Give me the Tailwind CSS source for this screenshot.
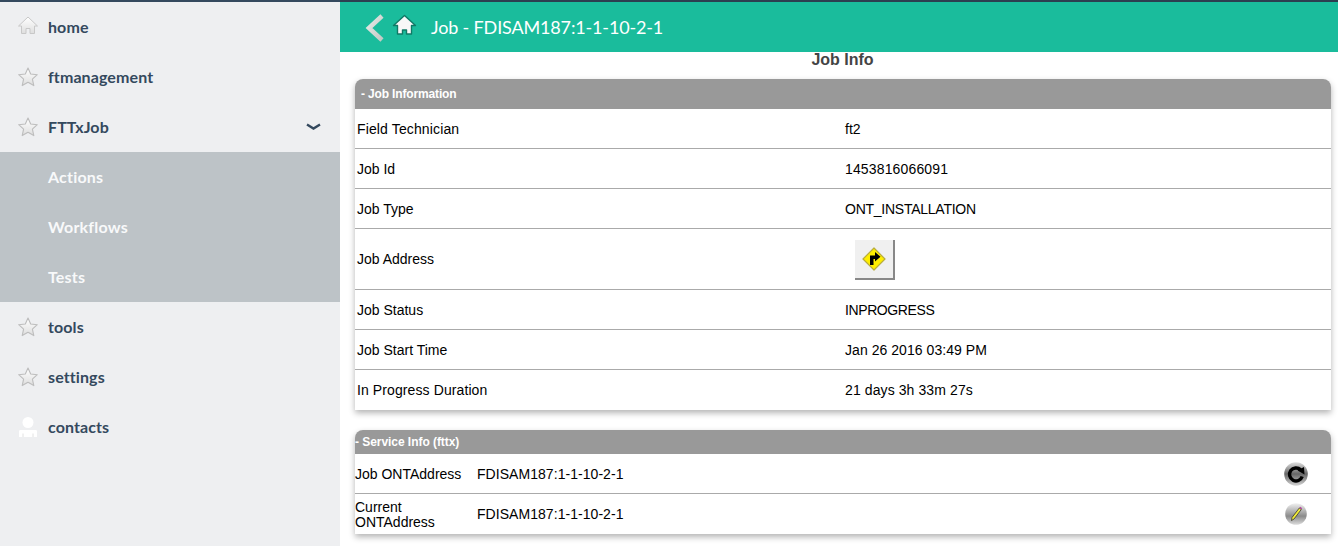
<!DOCTYPE html>
<html lang="en">
<head>
    <meta charset="UTF-8">
    <title>Job Info</title>
    <script src="https://cdn.jsdelivr.net/npm/@tailwindcss/browser@4"></script>
</head>
<body class="bg-white">
    <!-- shared gradients for the menu icons -->
    <svg class="absolute w-0 h-0">
        <defs>
            <linearGradient id="menuFill" x1="0" y1="0" x2="0" y2="1"><stop offset="0" stop-color="#ffffff"/><stop offset="1" stop-color="#dedede"/></linearGradient>
        </defs>
    </svg>
    <div class="flex h-[546px] w-[1338px] overflow-hidden font-['Liberation_Sans',Arial,sans-serif]">
        <!-- side menu -->
        <nav class="w-[340px] shrink-0 bg-[#eeeff1] border-t-2 border-[#34495e] text-[#34495e] font-['Lato',sans-serif] font-bold text-[16px] tracking-[0.1px]">
            <a class="flex items-center h-[50px] pl-[18px]">
                <svg class="w-5 h-5 mr-[10px] mb-[2px]" viewBox="0 0 20 20"><path d="M10 1 L0.5 10 L3.5 10 L3.5 17.5 L8 17.5 L8 12.5 L12 12.5 L12 17.5 L16.5 17.5 L16.5 10 L19.5 10 Z" fill="url(#menuFill)" stroke="#c8c8c8" stroke-width="1"/></svg>
                home
            </a>
            <a class="flex items-center h-[50px] pl-[18px]">
                <svg class="w-5 h-5 mr-[10px]" viewBox="0 0 20 20"><path d="M10 1 L12.7 7 L19.3 7.7 L14.4 12.1 L15.8 18.6 L10 15.3 L4.2 18.6 L5.6 12.1 L0.7 7.7 L7.3 7 Z" fill="url(#menuFill)" stroke="#bdbdbd" stroke-width="1.1" stroke-linejoin="round"/></svg>
                ftmanagement
            </a>
            <a class="flex items-center h-[50px] pl-[18px] pr-[19px]">
                <svg class="w-5 h-5 mr-[10px]" viewBox="0 0 20 20"><path d="M10 1 L12.7 7 L19.3 7.7 L14.4 12.1 L15.8 18.6 L10 15.3 L4.2 18.6 L5.6 12.1 L0.7 7.7 L7.3 7 Z" fill="url(#menuFill)" stroke="#bdbdbd" stroke-width="1.1" stroke-linejoin="round"/></svg>
                FTTxJob
                <svg class="ml-auto w-[15px] h-[8px]" viewBox="0 0 15 8"><path d="M1 1.5 L7.5 5.5 L14 1.5" fill="none" stroke="#34495e" stroke-width="2.4"/></svg>
            </a>
            <div class="bg-[#bdc3c7] text-[#f8f9fa] tracking-[0.2px]">
                <a class="flex items-center h-[50px] pl-[48px]">Actions</a>
                <a class="flex items-center h-[50px] pl-[48px]">Workflows</a>
                <a class="flex items-center h-[50px] pl-[48px]">Tests</a>
            </div>
            <a class="flex items-center h-[50px] pl-[18px]">
                <svg class="w-5 h-5 mr-[10px]" viewBox="0 0 20 20"><path d="M10 1 L12.7 7 L19.3 7.7 L14.4 12.1 L15.8 18.6 L10 15.3 L4.2 18.6 L5.6 12.1 L0.7 7.7 L7.3 7 Z" fill="url(#menuFill)" stroke="#bdbdbd" stroke-width="1.1" stroke-linejoin="round"/></svg>
                tools
            </a>
            <a class="flex items-center h-[50px] pl-[18px]">
                <svg class="w-5 h-5 mr-[10px]" viewBox="0 0 20 20"><path d="M10 1 L12.7 7 L19.3 7.7 L14.4 12.1 L15.8 18.6 L10 15.3 L4.2 18.6 L5.6 12.1 L0.7 7.7 L7.3 7 Z" fill="url(#menuFill)" stroke="#bdbdbd" stroke-width="1.1" stroke-linejoin="round"/></svg>
                settings
            </a>
            <a class="flex items-center h-[50px] pl-[18px]">
                <svg class="w-5 h-5 mr-[10px]" viewBox="0 0 20 20"><circle cx="10" cy="5.5" r="5.5" fill="#fff"/><path d="M1 14 Q1 13 2.5 13 L17.5 13 Q19 13 19 14 L19 20 L1 20 Z" fill="#fff"/><path d="M5 16.5 L5 20 M15 16.5 L15 20" stroke="#e2e2e2" stroke-width="1"/></svg>
                contacts
            </a>
        </nav>

        <main class="flex-1 min-w-0">
            <header class="h-[52px] bg-[#1abc9c] border-t-2 border-[#2c3e50] flex items-center pl-[25px] text-white font-['Lato',sans-serif] text-[18px] tracking-[-0.15px]">
                <svg class="w-[20px] h-[28px] mr-[7px] mt-[2px]" viewBox="0 0 20 28">
                    <defs><linearGradient id="backFill" x1="0" y1="0" x2="1" y2="1"><stop offset="0" stop-color="#e6e9e6"/><stop offset="1" stop-color="#c2c9c4"/></linearGradient></defs>
                    <path d="M17 2 L4 14 L17 26" fill="none" stroke="url(#backFill)" stroke-width="4.6"/>
                </svg>
                <svg class="w-[25px] h-[22px] mr-[14px] mb-[4px]" viewBox="0 0 25 22"><path d="M12.5 1.5 L1.5 11.5 L5.5 11.5 L5.5 20 L10.5 20 L10.5 16 L14.5 16 L14.5 20 L19.5 20 L19.5 11.5 L23.5 11.5 Z" fill="#f8f8f8" stroke="#0f7a66" stroke-width="1.4" stroke-linejoin="round"/></svg>
                <span>Job - FDISAM187:1-1-10-2-1</span>
            </header>

            <div class="pl-[15px] pr-[7px]">
                <h2 class="h-[27px] text-center text-[16px] font-bold leading-[15px] text-[#444] pr-[1px]">Job Info</h2>

                <section class="rounded-t-[8px] shadow-[0_3px_6px_rgba(0,0,0,0.3)] text-[14px] text-black">
                    <div class="h-[30px] pl-[6px] flex items-center rounded-t-[8px] bg-[#999] text-white text-[12px] font-bold tracking-[-0.15px]">- Job Information</div>
                    <div class="flex items-center h-[40px] border-b border-[#aaa] pl-[2px] pt-[2px]"><span class="w-[488px] tracking-[0.13px]">Field Technician</span><span>ft2</span></div>
                    <div class="flex items-center h-[40px] border-b border-[#aaa] pl-[2px] pt-[2px]"><span class="w-[488px]">Job Id</span><span class="tracking-[0.15px]">1453816066091</span></div>
                    <div class="flex items-center h-[40px] border-b border-[#aaa] pl-[2px] pt-[2px]"><span class="w-[488px]">Job Type</span><span class="tracking-[-0.25px]">ONT_INSTALLATION</span></div>
                    <div class="flex items-center h-[61px] border-b border-[#aaa] pl-[2px]">
                        <span class="w-[498px]">Job Address</span>
                        <button class="w-[40px] h-[40px] mt-[2px] flex items-center justify-center bg-[#f0f0f0] border-r-2 border-b-2 border-[#888]">
                            <svg class="w-[24px] h-[24px]" viewBox="0 0 24 24"><path d="M12 1 L23 12 L12 23 L1 12 Z" fill="#ffee00" stroke="#b9ad3c" stroke-width="1.2" stroke-linejoin="round"/><path d="M8 18 L8 8.5 L13 8.5 L13 5 L18.5 9.8 L13 14.5 L13 12 L11.5 12 L11.5 18 Z" fill="#000"/></svg>
                        </button>
                    </div>
                    <div class="flex items-center h-[40px] border-b border-[#aaa] pl-[2px] pt-[2px]"><span class="w-[488px]">Job Status</span><span class="tracking-[-0.4px]">INPROGRESS</span></div>
                    <div class="flex items-center h-[40px] border-b border-[#aaa] pl-[2px] pt-[2px]"><span class="w-[488px]">Job Start Time</span><span class="tracking-[0.05px]">Jan 26 2016 03:49 PM</span></div>
                    <div class="flex items-center h-[40px] pl-[2px]"><span class="w-[488px] tracking-[0.1px]">In Progress Duration</span><span class="tracking-[0.1px]">21 days 3h 33m 27s</span></div>
                </section>

                <section class="mt-[20px] rounded-t-[8px] shadow-[0_3px_6px_rgba(0,0,0,0.3)] text-[14px] text-black">
                    <div class="h-[24px] flex items-center rounded-t-[8px] bg-[#999] text-white text-[12px] font-bold tracking-[-0.05px]">- Service Info (fttx)</div>
                    <div class="flex items-center h-[40px] border-b border-[#aaa] pt-[2px]">
                        <span class="w-[122px] leading-[15px]">Job ONTAddress</span><span class="tracking-[0.05px]">FDISAM187:1-1-10-2-1</span>
                        <svg class="ml-auto mr-[23px] -mt-[2px] w-[24px] h-[24px]" viewBox="0 0 24 24">
                            <defs><linearGradient id="ball" x1="0" y1="0" x2="0" y2="1"><stop offset="0" stop-color="#e0e0e0"/><stop offset="0.5" stop-color="#666"/><stop offset="1" stop-color="#d4d4d4"/></linearGradient></defs>
                            <circle cx="12" cy="12" r="11.8" fill="url(#ball)"/>
                            <path d="M16.6 7.8 A6.5 6.5 0 1 0 18.2 14.5" fill="none" stroke="#000" stroke-width="3.4"/>
                            <path d="M13.5 8.5 L20 5 L20.5 12.5 Z" fill="#000"/>
                        </svg>
                    </div>
                    <div class="flex items-center h-[40px]">
                        <span class="w-[122px] leading-[15px] pt-[2px]">Current ONTAddress</span><span class="tracking-[0.05px]">FDISAM187:1-1-10-2-1</span>
                        <svg class="ml-auto mr-[24px] w-[22px] h-[22px]" viewBox="0 0 22 22">
                            <defs><linearGradient id="ball2" x1="0" y1="0" x2="0" y2="1"><stop offset="0" stop-color="#f2f2f2"/><stop offset="0.6" stop-color="#8a8a8a"/><stop offset="1" stop-color="#dcdcdc"/></linearGradient></defs>
                            <circle cx="11" cy="11" r="10.8" fill="url(#ball2)"/>
                            <path d="M6.5 17.5 L7 14.5 L14.3 5 L16.3 6.5 L9 16 Z" fill="#f2ec3a" stroke="#222" stroke-width="0.7"/>
                            <path d="M14.3 5 L15.2 3.8 L17.2 5.3 L16.3 6.5 Z" fill="#b04a9a"/>
                        </svg>
                    </div>
                </section>
            </div>
        </main>
    </div>
</body>
</html>
